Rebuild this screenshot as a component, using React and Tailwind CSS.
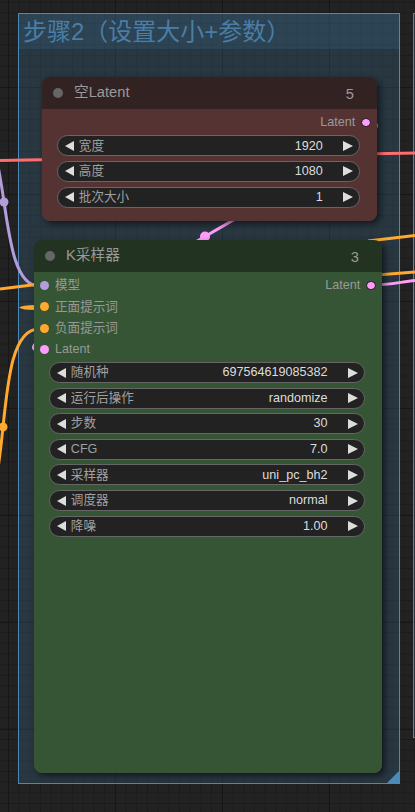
import React from "react";

const FONT = "font-['Liberation_Sans','Noto_Sans_CJK_SC',sans-serif]";

function Tri({ dir }) {
  if (dir === "left") {
    return (
      <svg width="9" height="10" viewBox="0 0 9 10" className="shrink-0">
        <polygon points="9,0 9,10 0,5" fill="#dddddd" />
      </svg>
    );
  }
  return (
    <svg width="10" height="10" viewBox="0 0 10 10" className="shrink-0">
      <polygon points="0,0 0,10 10,5" fill="#dddddd" />
    </svg>
  );
}

function Widget({ label, value }) {
  return (
    <div className="flex h-[21px] items-center rounded-full border border-[#666] bg-[#222] pl-[6.5px] pr-[6px] text-[12.6px] leading-none">
      <Tri dir="left" />
      <span className="ml-[5px] text-[#a0a0a0]">{label}</span>
      <span className="ml-auto text-[#dddddd]">{value}</span>
      <span className="ml-[20px] flex">
        <Tri dir="right" />
      </span>
    </div>
  );
}

function InSlot({ color, label }) {
  return (
    <div className="flex items-center pl-[5.8px]">
      <span className={`h-[9px] w-[9px] rounded-full ${color}`} />
      <span className="ml-[6.2px] text-[12.6px] leading-none text-[#999]">{label}</span>
    </div>
  );
}

function OutSlot({ label }) {
  return (
    <div className="flex items-center pr-[6.3px]">
      <span className="text-[12.6px] leading-none text-[#999]">{label}</span>
      <span className="ml-[6px] h-[9.5px] w-[9.5px] rounded-full border border-[#111] bg-[#ff9cf9]" />
    </div>
  );
}

function NodeHeader({ title, id, bg }) {
  return (
    <div className={`flex h-[31.5px] shrink-0 items-center rounded-t-[8px] pl-[10.5px] pr-[23px] ${bg}`}>
      <span className="h-[10px] w-[10px] rounded-full bg-[#666]" />
      <span className="ml-[11.5px] text-[14.7px] leading-none text-[#9a9a9a]">{title}</span>
      <span className="ml-auto mt-[3px] text-[14.7px] leading-none text-[#9a9a9a]">{id}</span>
    </div>
  );
}

export default function App() {
  const latentWidgets = [
    ["宽度", "1920"],
    ["高度", "1080"],
    ["批次大小", "1"],
  ];
  const samplerWidgets = [
    ["随机种", "697564619085382"],
    ["运行后操作", "randomize"],
    ["步数", "30"],
    ["CFG", "7.0"],
    ["采样器", "uni_pc_bh2"],
    ["调度器", "normal"],
    ["降噪", "1.00"],
  ];

  return (
    <div
      className={`relative h-[812px] w-[415px] overflow-hidden bg-[#222222] bg-[linear-gradient(to_right,#171717_1px,transparent_1px),linear-gradient(to_bottom,#171717_1px,transparent_1px),linear-gradient(to_right,#1c1c1c_1px,transparent_1px),linear-gradient(to_bottom,#1c1c1c_1px,transparent_1px)] bg-[size:107px_107px,107px_107px,10.7px_10.7px,10.7px_10.7px] bg-[position:8px_87px,8px_87px,8px_87px,8px_87px] ${FONT}`}
    >
      {/* neighbour group edge on the right */}
      <div className="absolute left-[413px] top-[13px] h-[725px] w-[20px] border border-[#4b8ab8] bg-[#3f789e]/25" />

      {/* group */}
      <div className="absolute left-[18px] top-[13px] flex h-[771px] w-[382px] flex-col border border-[#4b8ab8] bg-[#3f789e]/25">
        <div className="flex h-[35px] shrink-0 items-center bg-[#3f789e]/20 pl-[4px]">
          <span className="text-[24px] leading-none text-[#4a7ea6]">步骤2（设置大小+参数）</span>
        </div>
        <div className="flex flex-1 items-end justify-end">
          <svg width="12" height="12" viewBox="0 0 12 12">
            <polygon points="12,0 12,12 0,12" fill="#4b8ab8" />
          </svg>
        </div>
      </div>

      {/* links */}
      <svg className="pointer-events-none absolute left-0 top-0" width="415" height="812" viewBox="0 0 415 812">
        <line x1="0" y1="160.5" x2="415" y2="153" stroke="#ff6e6e" strokeWidth="3" />
        <path d="M -31 118 C 14.5 118, -6.5 286, 39 286" fill="none" stroke="#b39ddb" strokeWidth="3" />
        <circle cx="4" cy="202" r="4.5" fill="#b39ddb" />
        <path d="M 0 289 L 40 284 L 377 275 L 415 272" fill="none" stroke="#ffa931" strokeWidth="3" />
        <path d="M 36 305 Q 22 305 19 307.5 Q 22 310 36 310 Z" fill="#ffa931" />
        <path d="M -33 525 C 19 525, -13 329, 39 329" fill="none" stroke="#ffa931" strokeWidth="3" />
        <circle cx="3" cy="427" r="4.5" fill="#ffa931" />
        <path d="M 415 235.5 L 368 241" fill="none" stroke="#ffa931" strokeWidth="3" />
        <path d="M 371 123 C 431 123, -21 350, 39 350" fill="none" stroke="#ff9cf9" strokeWidth="3" />
        <circle cx="205" cy="236.5" r="5" fill="#ff9cf9" />
        <path d="M 371 285 C 390 285, 400 282, 415 280.5" fill="none" stroke="#ff9cf9" strokeWidth="3" />
      </svg>

      {/* 空Latent node */}
      <div className="absolute left-[42px] top-[77px] flex h-[143.5px] w-[335px] flex-col rounded-[8px] shadow-[3px_3px_6px_rgba(0,0,0,0.55)]">
        <NodeHeader title="空Latent" id="5" bg="bg-[#332222]" />
        <div className="flex flex-1 flex-col rounded-b-[8px] bg-[#553333] pt-[3.4px]">
          <div className="flex h-[21.3px] items-center justify-end">
            <OutSlot label="Latent" />
          </div>
          <div className="mt-[2.2px] flex flex-col gap-[4.6px] pl-[15.3px] pr-[17.3px]">
            {latentWidgets.map(([l, v]) => (
              <Widget key={l} label={l} value={v} />
            ))}
          </div>
        </div>
      </div>

      {/* K采样器 node */}
      <div className="absolute left-[34px] top-[240px] flex h-[533px] w-[348px] flex-col rounded-[8px] shadow-[3px_3px_6px_rgba(0,0,0,0.55)]">
        <NodeHeader title="K采样器" id="3" bg="bg-[#223322]" />
        <div className="flex flex-1 flex-col rounded-b-[8px] bg-[#355535] pt-[3.4px]">
          <div className="flex h-[21.3px] items-center justify-between">
            <InSlot color="bg-[#b39ddb]" label="模型" />
            <OutSlot label="Latent" />
          </div>
          <div className="flex h-[21.3px] items-center">
            <InSlot color="bg-[#ffa931]" label="正面提示词" />
          </div>
          <div className="flex h-[21.3px] items-center">
            <InSlot color="bg-[#ffa931]" label="负面提示词" />
          </div>
          <div className="flex h-[21.3px] items-center">
            <InSlot color="bg-[#ff9cf9]" label="Latent" />
          </div>
          <div className="mt-[2px] flex flex-col gap-[4.6px] pl-[15.3px] pr-[17.5px]">
            {samplerWidgets.map(([l, v]) => (
              <Widget key={l} label={l} value={v} />
            ))}
          </div>
        </div>
      </div>
    </div>
  );
}
